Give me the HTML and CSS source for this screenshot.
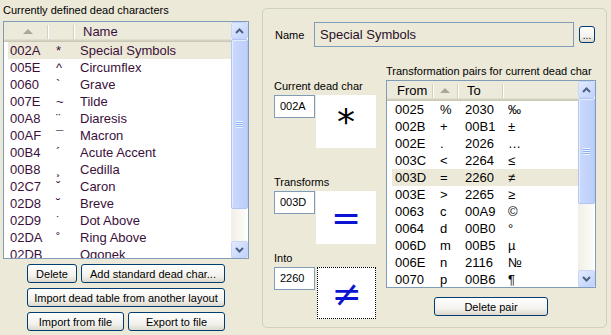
FILE: index.html
```html
<!DOCTYPE html>
<html lang="en">
<head>
    <meta charset="UTF-8">
    <title>Dead characters</title>
    <link rel="stylesheet" href="styles.css">
</head>
<body>

<div class="window">

    <section class="left">
        <div class="caption">Currently defined dead characters</div>

        <div class="listview dead-list">
            <div class="lv-body">
                <div class="lv-head">
                    <span class="hc dc-code"><i class="sort-up"></i></span>
                    <span class="sep"></span>
                    <span class="hc dc-char"></span>
                    <span class="sep"></span>
                    <span class="hc dc-name">Name</span>
                </div>
                <div class="lv-row sel"><span class="dc-code">002A</span><span class="dc-char">*</span><span>Special Symbols</span></div>
                <div class="lv-row"><span class="dc-code">005E</span><span class="dc-char">^</span><span>Circumflex</span></div>
                <div class="lv-row"><span class="dc-code">0060</span><span class="dc-char">`</span><span>Grave</span></div>
                <div class="lv-row"><span class="dc-code">007E</span><span class="dc-char">~</span><span>Tilde</span></div>
                <div class="lv-row"><span class="dc-code">00A8</span><span class="dc-char">¨</span><span>Diaresis</span></div>
                <div class="lv-row"><span class="dc-code">00AF</span><span class="dc-char">¯</span><span>Macron</span></div>
                <div class="lv-row"><span class="dc-code">00B4</span><span class="dc-char">´</span><span>Acute Accent</span></div>
                <div class="lv-row"><span class="dc-code">00B8</span><span class="dc-char">¸</span><span>Cedilla</span></div>
                <div class="lv-row"><span class="dc-code">02C7</span><span class="dc-char">ˇ</span><span>Caron</span></div>
                <div class="lv-row"><span class="dc-code">02D8</span><span class="dc-char">˘</span><span>Breve</span></div>
                <div class="lv-row"><span class="dc-code">02D9</span><span class="dc-char">˙</span><span>Dot Above</span></div>
                <div class="lv-row"><span class="dc-code">02DA</span><span class="dc-char">˚</span><span>Ring Above</span></div>
                <div class="lv-row"><span class="dc-code">02DB</span><span class="dc-char">˛</span><span>Ogonek</span></div>
            </div>
            <div class="vscroll">
                <div class="sb-btn"><svg width="9" height="6" viewBox="0 0 9 6"><polyline points="1,5 4.5,1.5 8,5" fill="none" stroke="#4d6185" stroke-width="2"/></svg></div>
                <div class="sb-thumb thumb-left"><i class="grip"></i></div>
                <div class="sb-track"></div>
                <div class="sb-btn"><svg width="9" height="6" viewBox="0 0 9 6"><polyline points="1,1 4.5,4.5 8,1" fill="none" stroke="#4d6185" stroke-width="2"/></svg></div>
            </div>
        </div>

        <div class="left-buttons">
            <div class="btn-row">
                <button class="btn btn-delete">Delete</button>
                <button class="btn btn-grow">Add standard dead char...</button>
            </div>
            <div class="btn-row">
                <button class="btn btn-grow">Import dead table from another layout</button>
            </div>
            <div class="btn-row">
                <button class="btn btn-grow">Import from file</button>
                <button class="btn btn-grow">Export to file</button>
            </div>
        </div>
    </section>

    <section class="group">
        <div class="name-row">
            <span class="name-label">Name</span>
            <div class="name-field">Special Symbols</div>
            <button class="btn btn-dots">...</button>
        </div>

        <div class="lower">
            <div class="chars">
                <div class="field-label first">Current dead char</div>
                <div class="char-row">
                    <div class="code-box">002A</div>
                    <div class="glyph-box glyph-black">*</div>
                </div>

                <div class="field-label">Transforms</div>
                <div class="char-row">
                    <div class="code-box">003D</div>
                    <div class="glyph-box glyph-eq">=</div>
                </div>

                <div class="field-label into">Into</div>
                <div class="char-row">
                    <div class="code-box">2260</div>
                    <div class="glyph-box glyph-ne focused">≠</div>
                </div>
            </div>

            <div class="pairs">
                <div class="pairs-caption">Transformation pairs for current dead char</div>
                <div class="listview pair-list">
                    <div class="lv-body">
                        <div class="lv-head">
                            <span class="hc tp-from">From</span>
                            <span class="sep"></span>
                            <span class="hc tp-arrow"><i class="sort-up"></i></span>
                            <span class="sep"></span>
                            <span class="hc tp-to">To</span>
                            <span class="sep"></span>
                            <span class="hc"></span>
                        </div>
                        <div class="lv-row"><span class="tp-c1">0025</span><span class="tp-c2">%</span><span class="tp-c3">2030</span><span>‰</span></div>
                        <div class="lv-row"><span class="tp-c1">002B</span><span class="tp-c2">+</span><span class="tp-c3">00B1</span><span>±</span></div>
                        <div class="lv-row"><span class="tp-c1">002E</span><span class="tp-c2">.</span><span class="tp-c3">2026</span><span>…</span></div>
                        <div class="lv-row"><span class="tp-c1">003C</span><span class="tp-c2">&lt;</span><span class="tp-c3">2264</span><span>≤</span></div>
                        <div class="lv-row sel"><span class="tp-c1">003D</span><span class="tp-c2">=</span><span class="tp-c3">2260</span><span>≠</span></div>
                        <div class="lv-row"><span class="tp-c1">003E</span><span class="tp-c2">&gt;</span><span class="tp-c3">2265</span><span>≥</span></div>
                        <div class="lv-row"><span class="tp-c1">0063</span><span class="tp-c2">c</span><span class="tp-c3">00A9</span><span>©</span></div>
                        <div class="lv-row"><span class="tp-c1">0064</span><span class="tp-c2">d</span><span class="tp-c3">00B0</span><span>°</span></div>
                        <div class="lv-row"><span class="tp-c1">006D</span><span class="tp-c2">m</span><span class="tp-c3">00B5</span><span>µ</span></div>
                        <div class="lv-row"><span class="tp-c1">006E</span><span class="tp-c2">n</span><span class="tp-c3">2116</span><span>№</span></div>
                        <div class="lv-row"><span class="tp-c1">0070</span><span class="tp-c2">p</span><span class="tp-c3">00B6</span><span>¶</span></div>
                    </div>
                    <div class="vscroll">
                        <div class="sb-btn"><svg width="9" height="6" viewBox="0 0 9 6"><polyline points="1,5 4.5,1.5 8,5" fill="none" stroke="#4d6185" stroke-width="2"/></svg></div>
                        <div class="sb-thumb thumb-right"><i class="grip"></i></div>
                        <div class="sb-track"></div>
                        <div class="sb-btn"><svg width="9" height="6" viewBox="0 0 9 6"><polyline points="1,1 4.5,4.5 8,1" fill="none" stroke="#4d6185" stroke-width="2"/></svg></div>
                    </div>
                </div>
                <button class="btn btn-delete-pair">Delete pair</button>
            </div>
        </div>
    </section>

</div>

</body>
</html>
```

FILE: styles.css
```css
* {
    box-sizing: border-box;
}

body {
    margin: 0;
    width: 611px;
    height: 335px;
    overflow: hidden;
    background-color: #ece9d8;
    font-family: "Liberation Sans", Arial, sans-serif;
    font-size: 11px;
    color: #000;
}

.window {
    display: flex;
    align-items: flex-start;
}

/* left side */
.left {
    width: 249px;
    padding: 3px 0 0 3px;
}

.caption {
    height: 18px;
    line-height: 14px;
}

.listview {
    display: flex;
    border: 1px solid #7f9db9;
    background-color: #fff;
}

.dead-list {
    width: 246px;
    height: 238px;
    color: #3b0f3b;
}

.lv-body {
    flex: 1;
    overflow: hidden;
}

.lv-head {
    display: flex;
    align-items: center;
    height: 20px;
    background-color: #ebeadb;
    box-shadow: inset 0 -1px #cbc7b8, inset 0 -2px #d6d2c2, inset 0 -3px #e2decd;
    font-size: 13px;
}

.hc {
    display: flex;
    align-items: center;
    height: 100%;
    padding-bottom: 2px;
}

.sep {
    width: 2px;
    height: 14px;
    border-left: 1px solid #d3cfbe;
    border-right: 1px solid #fff;
}

.sort-up {
    display: block;
    width: 0;
    height: 0;
    border-left: 5px solid transparent;
    border-right: 5px solid transparent;
    border-bottom: 5px solid #aca899;
}

.dc-code { width: 46px; }
.lv-head .dc-code { width: 43px; padding-left: 19px; }
.dc-char { width: 24px; }
.lv-head .dc-char { width: 24px; }
.lv-head .dc-name { padding-left: 8px; }

.lv-row {
    display: flex;
    height: 17px;
    line-height: 17px;
    font-size: 13px;
    white-space: nowrap;
}

.dead-list .lv-row {
    margin-left: 4px;
    padding-left: 2px;
}

.lv-row.sel {
    background-color: #ece9d8;
}

/* scrollbars */
.vscroll {
    width: 17px;
    display: flex;
    flex-direction: column;
    background: linear-gradient(to right, #f1efe6, #fdfdfa);
}

.sb-btn {
    height: 17px;
    flex: none;
    display: flex;
    align-items: center;
    justify-content: center;
    border: 1px solid #c6d5fb;
    border-radius: 2px;
    background: linear-gradient(135deg, #e2ebfe, #c0d1fb);
}

.sb-thumb {
    flex: none;
    display: flex;
    align-items: center;
    justify-content: center;
    border: 1px solid #b0c5f5;
    border-radius: 2px;
    background: linear-gradient(to right, #cad9fd, #bccefa);
    box-shadow: inset 1px 1px #e4ecfe;
}

.thumb-left { height: 170px; }
.thumb-right { height: 106px; }

.grip {
    display: block;
    width: 7px;
    height: 7px;
    background: repeating-linear-gradient(#eef4fe 0 1px, #8cb0f8 1px 2px);
}

.sb-track {
    flex: 1;
}

/* buttons */
.btn {
    height: 19px;
    padding: 0;
    border: 1px solid #003c74;
    border-radius: 3px;
    background: linear-gradient(#fff, #f2f1ec 65%, #dcd8cc);
    font-family: "Liberation Sans", Arial, sans-serif;
    font-size: 11px;
    color: #000;
}

.left-buttons {
    width: 198px;
    margin: 5px 0 0 24px;
    display: flex;
    flex-direction: column;
    gap: 5px;
}

.btn-row {
    display: flex;
    gap: 4px;
}

.btn-delete { width: 50px; }
.btn-grow { flex: 1; }

/* right group */
.group {
    margin: 8px 0 0 13px;
    width: 345px;
    height: 320px;
    border: 1px solid #d0d0bf;
    border-radius: 5px;
    padding: 13px 0 0 12px;
}

.name-row {
    display: flex;
    align-items: center;
}

.name-label {
    width: 39px;
}

.name-field {
    width: 260px;
    height: 25px;
    line-height: 23px;
    padding-left: 5px;
    border: 1px solid #7f9db9;
    font-size: 13px;
    color: #2a0f2a;
}

.btn-dots {
    width: 16px;
    height: 17px;
    margin-left: 5px;
    line-height: 18px;
    font-size: 10px;
}

.lower {
    display: flex;
    gap: 10px;
    margin: 13px 0 0 -1px;
}

.chars {
    width: 102px;
}

.field-label {
    line-height: 13px;
    margin: 28px 0 2px;
}

.field-label.first { margin-top: 20px; }
.field-label.into { margin-top: 8px; }

.char-row {
    display: flex;
    align-items: flex-start;
}

.code-box {
    width: 41px;
    height: 23px;
    padding: 4px 0 0 5px;
    border: 1px solid #7f9db9;
    background-color: #fff;
}

.glyph-box {
    width: 60px;
    height: 53px;
    margin-left: 1px;
    display: flex;
    align-items: center;
    justify-content: center;
    background-color: #fff;
    font-family: "DejaVu Sans", sans-serif;
    font-size: 36px;
}

.glyph-black { color: #000; }
.glyph-eq, .glyph-ne { color: #0a14d2; }

.glyph-box.focused {
    width: 59px;
    height: 52px;
    margin-left: 2px;
    border: 1px dotted #000;
}

.pairs {
    width: 210px;
    display: flex;
    flex-direction: column;
}

.pairs-caption {
    line-height: 14px;
    margin-top: 4px;
}

.pair-list {
    width: 210px;
    height: 208px;
    margin-top: 2px;
}

.tp-from { width: 45px; padding-left: 10px; }
.tp-arrow { width: 23px; padding-left: 6px; }
.tp-to { width: 43px; padding-left: 8px; }

.pair-list .lv-row {
    margin-left: 5px;
    padding-left: 3px;
}

.tp-c1 { width: 45px; }
.tp-c2 { width: 25px; }
.tp-c3 { width: 43px; }

.btn-delete-pair {
    width: 114px;
    margin: 9px auto 0;
}
```
